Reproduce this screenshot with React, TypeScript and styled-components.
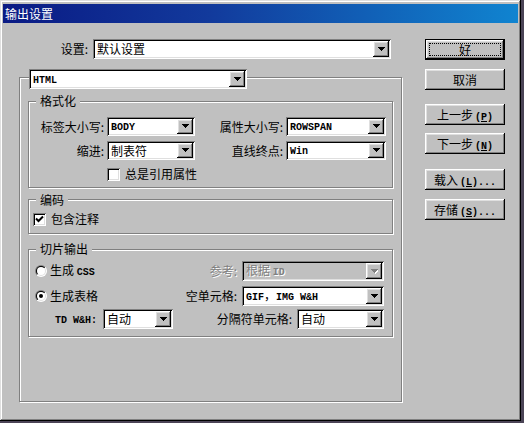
import React from "react";
import styled, { createGlobalStyle, css } from "styled-components";

const GlobalStyle = createGlobalStyle`
  body {
    margin: 0;
    background: #4b4456;
    font-family: "Noto Sans CJK SC", "DejaVu Sans", sans-serif;
    font-size: 12px;
    line-height: 14px;
    color: #000;
  }
`;

const raisedEdge = css`
  background: #c0c0c0;
  box-shadow: inset -1px -1px #000, inset 1px 1px #fff, inset -2px -2px #808080,
    inset 2px 2px #dfdfdf;
`;

const sunkenEdge = css`
  box-shadow: inset 1px 1px #808080, inset -1px -1px #fff, inset 2px 2px #000,
    inset -2px -2px #dfdfdf;
`;

const Window = styled.div`
  width: 521px;
  height: 421px;
  box-sizing: border-box;
  padding: 4px 3px 3px;
  background: #c0c0c0;
  box-shadow: inset -1px -1px #000, inset 1px 1px #dfdfdf, inset -2px -2px #808080,
    inset 2px 2px #fff;
`;

const TitleBar = styled.div`
  height: 19px;
  display: flex;
  align-items: center;
  padding-left: 2px;
  background: linear-gradient(90deg, #0a1a84 0%, #123a9c 40%, #1084d0 100%);
  color: #fff;
  font-size: 12px;
`;

const Body = styled.div`
  display: flex;
  padding: 16px 0 0 16px;
`;

const Main = styled.div`
  width: 384px;
  display: flex;
  flex-direction: column;
`;

const SettingsRow = styled.div`
  height: 20px;
  display: flex;
  align-items: center;
  justify-content: flex-end;
  gap: 5px;
  padding-right: 12px;
`;

const Group = styled.div<{ $mt: number; $h: number; $outer?: boolean }>`
  box-sizing: border-box;
  height: ${(p) => p.$h}px;
  margin: ${(p) => (p.$outer ? `${p.$mt}px 0 0` : `${p.$mt}px 8px 0`)};
  width: ${(p) => (p.$outer ? "383px" : "auto")};
  border: 1px solid #808080;
  box-shadow: inset 1px 1px #fff, 1px 1px #fff;
  display: flex;
  flex-direction: column;
`;

const Legend = styled.div<{ $mt: number }>`
  align-self: flex-start;
  margin: ${(p) => p.$mt}px 0 0 7px;
  padding: 0 4px;
  background: #c0c0c0;
  line-height: 14px;
`;

const HeaderCombo = styled.div`
  align-self: flex-start;
  margin: -9px 0 0 9px;
`;

const Combo = styled.div<{ $w: number; $h: number; $disabled?: boolean }>`
  width: ${(p) => p.$w}px;
  height: ${(p) => p.$h}px;
  box-sizing: border-box;
  padding: 2px;
  display: flex;
  align-items: center;
  background: ${(p) => (p.$disabled ? "#c0c0c0" : "#fff")};
  ${sunkenEdge}
`;

const ComboText = styled.span<{ $disabled?: boolean }>`
  flex: 1;
  min-width: 0;
  padding-left: 2px;
  line-height: 16px;
  white-space: nowrap;
  color: ${(p) => (p.$disabled ? "#808080" : "#000")};
  text-shadow: ${(p) => (p.$disabled ? "1px 1px #fff" : "none")};
`;

const DropButton = styled.span`
  width: 16px;
  flex-shrink: 0;
  align-self: stretch;
  display: flex;
  align-items: center;
  justify-content: center;
  ${raisedEdge}
`;

const Mono = styled.span`
  font-family: "Liberation Mono", "Courier New", monospace;
  font-size: 10px;
  font-weight: bold;
`;

const Mnemonic = styled(Mono)`
  margin-left: 2px;
`;

const FormatGrid = styled.div`
  display: grid;
  grid-template-columns: 78px 88px 91px 100px;
  grid-auto-rows: 19px;
  row-gap: 5px;
  align-items: center;
  margin-top: 9px;
`;

const FieldLabel = styled.label<{ $disabled?: boolean }>`
  text-align: right;
  white-space: nowrap;
  padding-right: 3px;
  color: ${(p) => (p.$disabled ? "#808080" : "#000")};
  text-shadow: ${(p) => (p.$disabled ? "1px 1px #fff" : "none")};
`;

const CheckRow = styled.div<{ $mt: number; $indent: number }>`
  display: flex;
  align-items: center;
  gap: 5px;
  margin-top: ${(p) => p.$mt}px;
  padding-left: ${(p) => p.$indent}px;
`;

const CheckBox = styled.span`
  width: 13px;
  height: 13px;
  box-sizing: border-box;
  display: inline-flex;
  background: #fff;
  ${sunkenEdge}
`;

const SliceRow = styled.div<{ $mt: number }>`
  height: 20px;
  display: flex;
  align-items: center;
  margin-top: ${(p) => p.$mt}px;
  padding-right: 8px;
`;

const SliceLeft = styled.div<{ $indent: number }>`
  display: flex;
  align-items: center;
  gap: 3px;
  padding-left: ${(p) => p.$indent}px;
`;

const SliceRight = styled.div`
  margin-left: auto;
  display: flex;
  align-items: center;
  gap: 2px;
`;

const Buttons = styled.div`
  display: flex;
  flex-direction: column;
  margin-left: 22px;
`;

const Button = styled.button<{ $mt: number; $default?: boolean }>`
  position: relative;
  width: 80px;
  height: 21px;
  margin-top: ${(p) => p.$mt}px;
  padding: 0;
  box-sizing: border-box;
  border: ${(p) => (p.$default ? "1px solid #000" : "none")};
  font-family: inherit;
  font-size: 12px;
  color: #000;
  ${raisedEdge}

  ${(p) =>
    p.$default &&
    css`
      &::after {
        content: "";
        position: absolute;
        inset: 3px;
        border: 1px dotted #000;
      }
    `}
`;

const Arrow = ({ disabled }: { disabled?: boolean }) => (
  <svg width="7" height="5" viewBox="0 0 7 5" shapeRendering="crispEdges">
    {disabled && (
      <path d="M1 1h7v1h-1v1h-1v1h-1v1h-1v-1h-1v-1h-1v-1h-1z" fill="#fff" />
    )}
    <path
      d="M0 0h7v1h-1v1h-1v1h-1v1h-1v-1h-1v-1h-1v-1h-1z"
      fill={disabled ? "#808080" : "#000"}
    />
  </svg>
);

const Select = ({
  w,
  h,
  disabled,
  children,
}: {
  w: number;
  h: number;
  disabled?: boolean;
  children: React.ReactNode;
}) => (
  <Combo $w={w} $h={h} $disabled={disabled}>
    <ComboText $disabled={disabled}>{children}</ComboText>
    <DropButton>
      <Arrow disabled={disabled} />
    </DropButton>
  </Combo>
);

const Check = ({ checked }: { checked?: boolean }) => (
  <CheckBox>
    {checked && (
      <svg width="13" height="13" viewBox="0 0 13 13">
        <polyline points="3,5.5 5.5,8 10,3.5" fill="none" stroke="#000" strokeWidth="2" />
      </svg>
    )}
  </CheckBox>
);

const Radio = ({ checked, id }: { checked?: boolean; id: string }) => (
  <svg width="12" height="12" viewBox="0 0 12 12">
    <defs>
      <linearGradient id={`${id}-o`} x1="0" y1="0" x2="1" y2="1">
        <stop offset="0.5" stopColor="#808080" />
        <stop offset="0.5" stopColor="#fff" />
      </linearGradient>
      <linearGradient id={`${id}-i`} x1="0" y1="0" x2="1" y2="1">
        <stop offset="0.5" stopColor="#000" />
        <stop offset="0.5" stopColor="#dfdfdf" />
      </linearGradient>
    </defs>
    <circle cx="6" cy="6" r="6" fill={`url(#${id}-o)`} />
    <circle cx="6" cy="6" r="5" fill={`url(#${id}-i)`} />
    <circle cx="6" cy="6" r="4" fill="#fff" />
    {checked && <circle cx="6" cy="6" r="2" fill="#000" />}
  </svg>
);

const App = () => {
  return (
    <>
      <GlobalStyle />
      <Window>
        <TitleBar>输出设置</TitleBar>
        <Body>
          <Main>
            <SettingsRow>
              <label>设置:</label>
              <Select w={298} h={20}>
                默认设置
              </Select>
            </SettingsRow>

            <Group $outer $mt={18} $h={325}>
              <HeaderCombo>
                <Select w={218} h={20}>
                  <Mono>HTML</Mono>
                </Select>
              </HeaderCombo>

              <Group $mt={12} $h={87}>
                <Legend $mt={-8}>格式化</Legend>
                <FormatGrid>
                  <FieldLabel>标签大小写:</FieldLabel>
                  <Select w={88} h={19}>
                    <Mono>BODY</Mono>
                  </Select>
                  <FieldLabel>属性大小写:</FieldLabel>
                  <Select w={100} h={19}>
                    <Mono>ROWSPAN</Mono>
                  </Select>
                  <FieldLabel>缩进:</FieldLabel>
                  <Select w={88} h={19}>
                    制表符
                  </Select>
                  <FieldLabel>直线终点:</FieldLabel>
                  <Select w={100} h={19}>
                    <Mono>Win</Mono>
                  </Select>
                </FormatGrid>
                <CheckRow $mt={7} $indent={78}>
                  <Check />
                  <span>总是引用属性</span>
                </CheckRow>
              </Group>

              <Group $mt={11} $h={35}>
                <Legend $mt={-7}>编码</Legend>
                <CheckRow $mt={5} $indent={4}>
                  <Check checked />
                  <span>包含注释</span>
                </CheckRow>
              </Group>

              <Group $mt={15} $h={88}>
                <Legend $mt={-8}>切片输出</Legend>
                <SliceRow $mt={5}>
                  <SliceLeft $indent={6}>
                    <Radio id="css" />
                    <span>
                      生成 <Mono>CSS</Mono>
                    </span>
                  </SliceLeft>
                  <SliceRight>
                    <FieldLabel $disabled>参考:</FieldLabel>
                    <Select w={142} h={20} disabled>
                      根据 <Mono>ID</Mono>
                    </Select>
                  </SliceRight>
                </SliceRow>
                <SliceRow $mt={5}>
                  <SliceLeft $indent={6}>
                    <Radio id="table" checked />
                    <span>生成表格</span>
                  </SliceLeft>
                  <SliceRight>
                    <FieldLabel>空单元格:</FieldLabel>
                    <Select w={142} h={20}>
                      <Mono>GIF</Mono>，<Mono>IMG W&amp;H</Mono>
                    </Select>
                  </SliceRight>
                </SliceRow>
                <SliceRow $mt={3}>
                  <SliceLeft $indent={26}>
                    <FieldLabel>
                      <Mono>TD W&amp;H:</Mono>
                    </FieldLabel>
                    <Select w={70} h={20}>
                      自动
                    </Select>
                  </SliceLeft>
                  <SliceRight>
                    <FieldLabel>分隔符单元格:</FieldLabel>
                    <Select w={87} h={20}>
                      自动
                    </Select>
                  </SliceRight>
                </SliceRow>
              </Group>
            </Group>
          </Main>

          <Buttons>
            <Button $mt={0} $default>
              好
            </Button>
            <Button $mt={9}>取消</Button>
            <Button $mt={14}>
              上一步<Mnemonic>(<u>P</u>)</Mnemonic>
            </Button>
            <Button $mt={8}>
              下一步<Mnemonic>(<u>N</u>)</Mnemonic>
            </Button>
            <Button $mt={15}>
              载入<Mnemonic>(<u>L</u>)...</Mnemonic>
            </Button>
            <Button $mt={9}>
              存储<Mnemonic>(<u>S</u>)...</Mnemonic>
            </Button>
          </Buttons>
        </Body>
      </Window>
    </>
  );
};

export default App;
